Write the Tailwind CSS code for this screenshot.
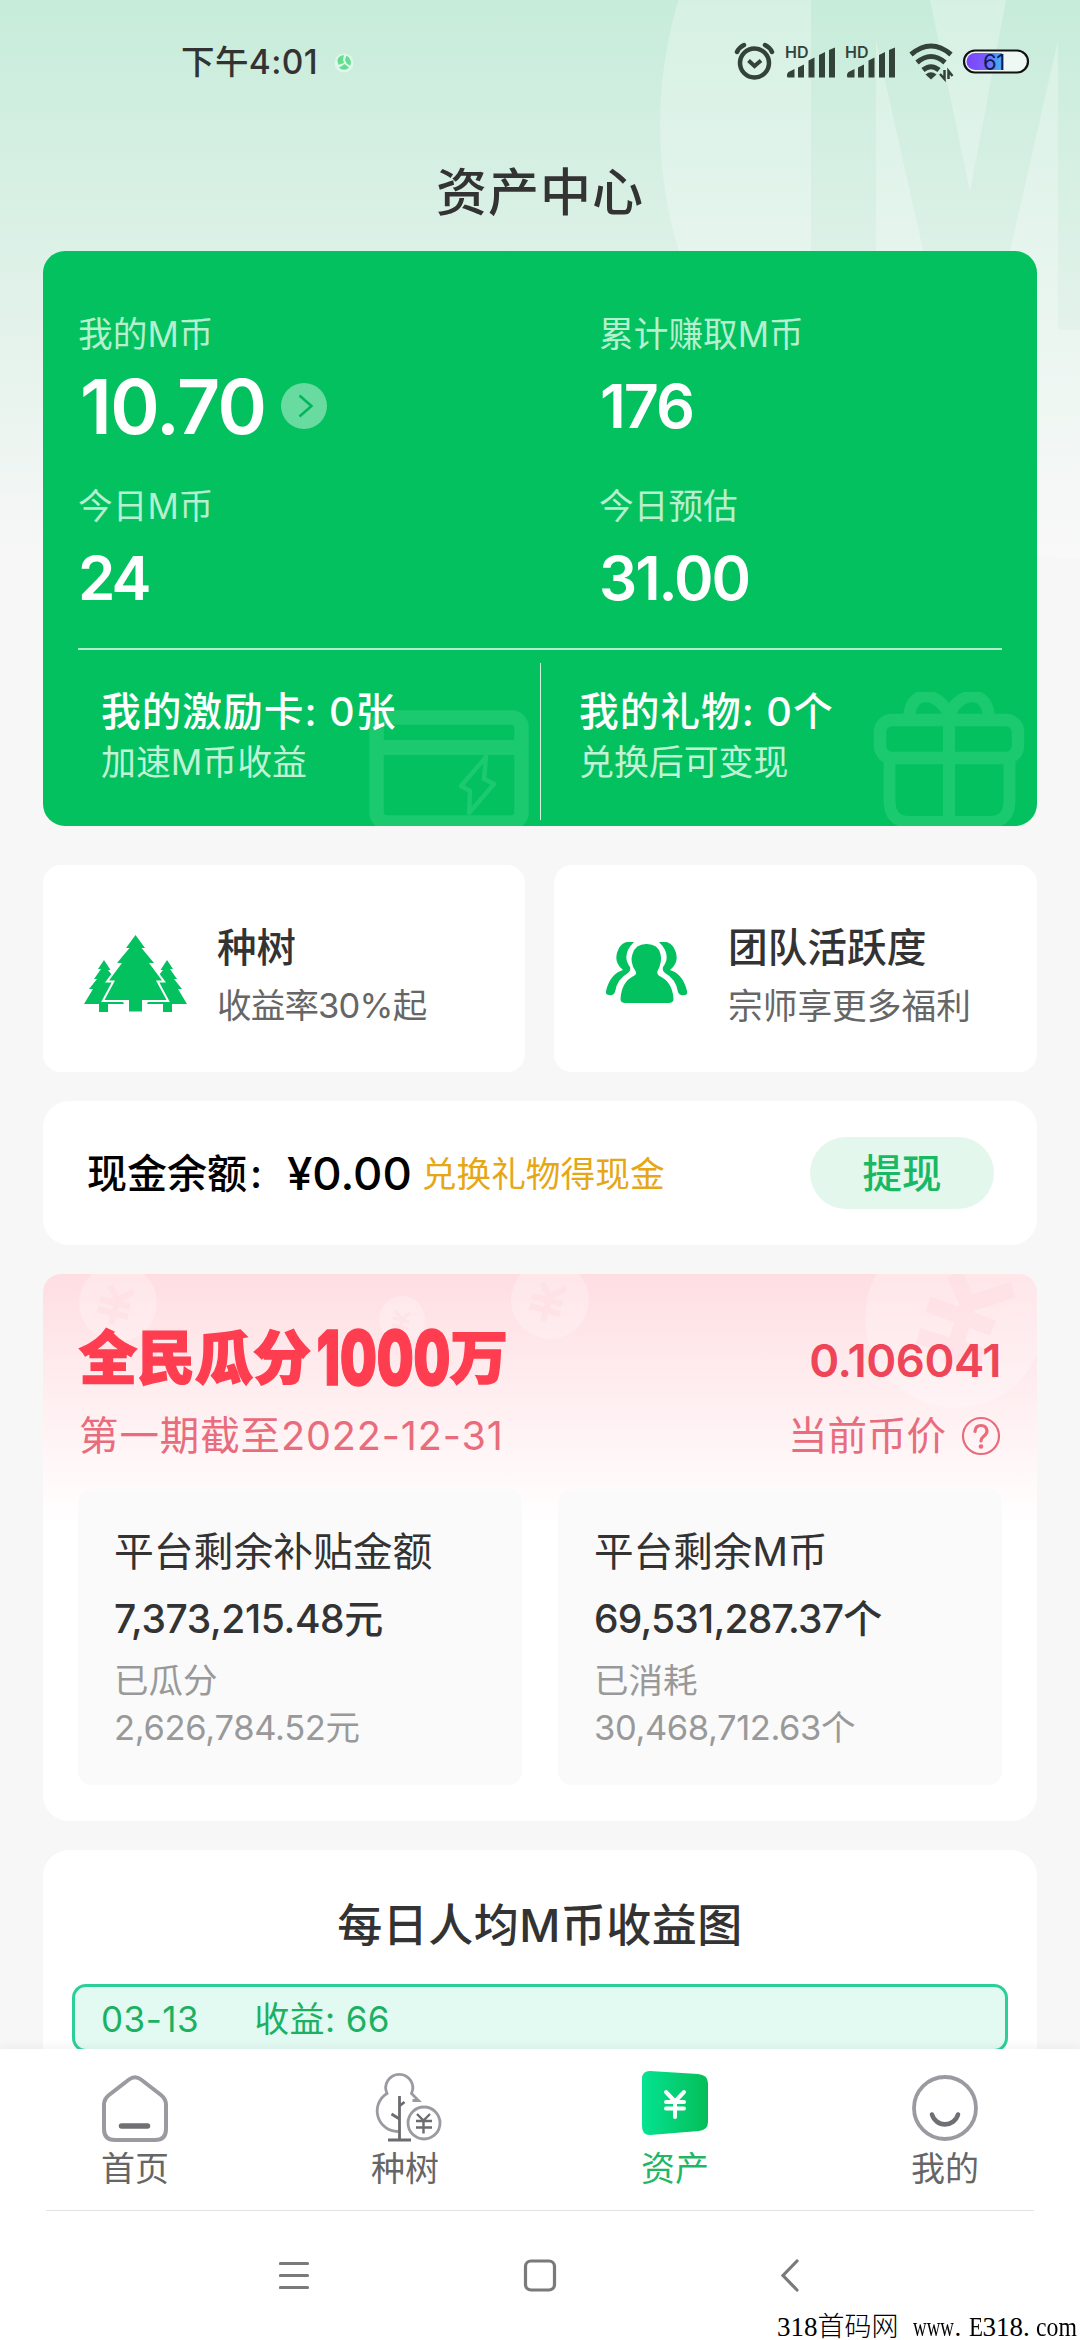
<!DOCTYPE html>
<html lang="zh-CN">
<head>
<meta charset="utf-8">
<title>资产中心</title>
<script src="https://cdn.jsdelivr.net/npm/@tailwindcss/browser@4"></script>
</head>
<body class="w-[1080px] h-[2340px] overflow-hidden bg-[#f7f7f7] font-['Inter','Noto_Sans_CJK_SC',sans-serif] text-[#333]">
<div class="relative w-[1080px] h-[2340px] overflow-hidden flex flex-col whitespace-nowrap">

  <!-- header backdrop -->
  <div class="absolute inset-x-0 top-0 h-[560px] bg-linear-to-b from-[#c7ecda] to-[#f7f7f7]">
    <svg class="w-full h-full" viewBox="0 0 1080 560">
      <mask id="m"><rect width="1080" height="560" fill="#fff"/><path fill="#000" d="M811 0H930L970 192L1006 0H1080V330H1058V40L992 330H941L876 40V330H811Z"/></mask>
      <circle cx="1094" cy="125" r="434" fill="#fff" fill-opacity=".27" mask="url(#m)"/>
    </svg>
  </div>

  <!-- status bar -->
  <div class="relative h-[126px] pl-[181px] pr-[50px] flex items-center">
    <span class="text-[33.500px] leading-none font-medium tracking-[.4px]">下午4:01</span>
    <svg class="ml-[16px] w-[20px] h-[20px]" viewBox="0 0 18 18"><circle cx="9" cy="9" r="8.500" fill="#dff7ea"/><path d="M3 6.500a6.500 6.500 0 0 1 6-4.500l-1 4 1 3-5 1.500zM11 2.500a6.500 6.500 0 0 1 3.500 9l-3-2-1.500-3zM13.500 13a6 6 0 0 1-9 0l3-1.500 2-1.500z" fill="#63dd90"/></svg>
    <svg class="absolute left-[730px] top-[38px] w-[305px] h-[50px]" viewBox="730 38 305 50" fill="none" stroke="#33433a">
      <circle cx="754.500" cy="63" r="14.500" stroke-width="4.500"/>
      <path d="M748.500 60.500l6 5.500 6.500-5.500" stroke-width="4"/>
      <path d="M737 52q2-4.500 7-7M772 52q-2-4.500-7-7" stroke-width="4.500" stroke-linecap="round"/>
      <g fill="#33433a" stroke="none">
        <g id="sig"><path d="M787.500 77.500q-1.500-3 1-5.500l6-3v8.500zM798 77.500v-10l6-3v13zM808.500 77.500v-17l6-3v20zM819 77.500v-22.500l6-3v25.500zM829 77.500V50l6-2.500v30z"/></g>
        <use href="#sig" x="60"/>
      </g>
      <path d="M911 54.500q20-17 40 0M917 62.500q14-12 28 0M923 70q8-6.500 16 0" stroke-width="5"/>
      <path d="M925.500 74.500q5.500-4.500 11 0l-5.500 5z" fill="#33433a" stroke="none"/>
      <path d="M944.500 70v9l-4.500-5M948.500 79v-8l4 5" stroke-width="2.500"/>
      <rect x="964" y="50.500" width="64" height="22" rx="11" fill="#eef9f3" stroke="#111" stroke-width="2.200"/>
      <linearGradient id="bat"><stop offset="0" stop-color="#7b45fb"/><stop offset=".55" stop-color="#7a5cff"/><stop offset="1" stop-color="#3fb5f5"/></linearGradient>
      <path d="M975 53h27v17h-27a8.500 8.500 0 0 1 0-17z" fill="url(#bat)" stroke="none"/>
    </svg>
    <span class="absolute left-[785px] top-[44px] text-[16px] leading-[16px] font-semibold text-[#33433a]">HD</span>
    <span class="absolute left-[845px] top-[44px] text-[16px] leading-[16px] font-semibold text-[#33433a]">HD</span>
    <span class="absolute left-[983px] top-[52px] text-[22px] leading-[20px] font-normal tracking-[-.5px] text-[#0b1c55]">61</span>
  </div>

  <h1 class="relative h-[125px] pt-[32px] text-center text-[51px] leading-[70px] font-medium tracking-[1px]">资产中心</h1>

  <main class="relative px-[43px] h-[1798px] overflow-hidden flex flex-col">

    <!-- asset summary -->
    <section class="relative h-[575px] shrink-0 rounded-[22px] bg-[#03c15f] text-white overflow-hidden flex flex-col">
      <div class="h-[397px] pt-[63px] pl-[35px] grid grid-cols-[521px_1fr] grid-rows-[172px_1fr]">
        <div>
          <p class="text-[34.700px] leading-[40px] text-[#b6f0cf]">我的M币</p>
          <div class="mt-[13px] pl-[2px] flex items-center gap-[16px]">
            <span class="text-[75px] leading-[80px] font-semibold tracking-[-1.500px]">10.70</span>
            <svg class="w-[46px] h-[46px] -mt-[3px]" viewBox="0 0 46 46" fill="none"><circle cx="23" cy="23" r="23" fill="#67dba0"/><path d="M18.500 12.500l12 10.500-12 10.500" stroke="#03b559" stroke-width="2.500"/></svg>
          </div>
        </div>
        <div>
          <p class="text-[34.700px] leading-[40px] text-[#b6f0cf]">累计赚取M币</p>
          <p class="mt-[12px] pl-[1px] text-[61px] leading-[80px] font-semibold tracking-[-2px]">176</p>
        </div>
        <div>
          <p class="text-[34.700px] leading-[40px] text-[#b6f0cf]">今日M币</p>
          <p class="mt-[22px] text-[60px] leading-[60px] font-semibold tracking-[-3px]">24</p>
        </div>
        <div>
          <p class="text-[34.700px] leading-[40px] text-[#b6f0cf]">今日预估</p>
          <p class="mt-[22px] text-[60px] leading-[60px] font-semibold tracking-[-2px]">31.00</p>
        </div>
      </div>
      <div class="mx-[35px] h-[2px] bg-[#b5ecce]"></div>
      <svg class="absolute left-[326px] top-[441px] w-[668px] h-[134px]" viewBox="369 692 668 134" fill="none" stroke="#1bc96f">
        <rect x="376.500" y="717.500" width="145" height="105" rx="10" stroke-width="14.500"/>
        <path d="M376 747.500h146" stroke-width="15"/>
        <path d="M486 757l-25 29 9 5-1 22 25-29-10-5z" stroke-width="4.500" stroke-linejoin="round"/>
        <rect x="880" y="720" width="138" height="38" rx="12" stroke-width="12.500"/>
        <path d="M889.500 758v42q0 22 20 22h80q20 0 20-22v-42M949 720v102" stroke-width="12"/>
        <path d="M909 720c0-34 32-28 40-4c8-24 40-30 40 4" stroke-width="12"/>
      </svg>
      <div class="relative flex-1 pt-[37px] pl-[58px] grid grid-cols-[478px_1fr]">
        <div>
          <p class="text-[39.700px] leading-[50px] font-medium tracking-[1px]">我的激励卡: 0张</p>
          <p class="mt-[5px] text-[34.900px] leading-[40px] text-[#c0f3d6]">加速M币收益</p>
        </div>
        <div>
          <p class="text-[39.700px] leading-[50px] font-medium tracking-[1px]">我的礼物: 0个</p>
          <p class="mt-[5px] text-[34.900px] leading-[40px] text-[#c0f3d6]">兑换后可变现</p>
        </div>
        <div class="absolute left-[497px] top-[13px] w-px h-[157px] bg-[#d5f5e3]"></div>
      </div>
    </section>

    <!-- shortcuts -->
    <section class="mt-[39px] h-[207px] shrink-0 grid grid-cols-[482px_483px] gap-[29px]">
      <div class="rounded-[18px] bg-white pl-[41px] flex">
        <svg class="mt-[69px] w-[104px] h-[80px]" viewBox="84 934 104 80" fill="#03c15f">
          <path d="M104 960l6.500 10h-2.500l8 10h-3l8 12h-3l6 12h-16v8h-9v-8h-15l9-15h-4l8-10h-3l7-10h-3z"/>
          <path d="M167 960l-6.500 10h2.500l-8 10h3l-8 12h3l-6 12h16v8h9v-8h15l-9-15h4l-8-10h3l-7-10h3z"/>
          <path stroke="#fff" stroke-width="4" paint-order="stroke" d="M135.500 935l9.500 13h-3.500l12.500 15h-5l13 17.500h-6l10.500 19.500h-24.500v11.500h-13v-11.500h-24.500l10.500-19.500h-6l13-17.500h-5l12.500-15h-3.500z"/>
        </svg>
        <div class="ml-[29px] pt-[58px]">
          <p class="text-[39.500px] leading-[50px] font-medium">种树</p>
          <p class="mt-[13px] text-[34.500px] leading-[40px] tracking-[-.8px] text-[#666]">收益率30%起</p>
        </div>
      </div>
      <div class="rounded-[18px] bg-white pl-[52px] flex">
        <svg class="mt-[77px] w-[82px] h-[62px]" viewBox="606 943 82 62" fill="#03c15f">
          <path d="M634 943q-10-2-15 6q-7 13 4 22q-13 4-17 21q-1 4 3 4q4 1 6-3q2-13 13-19q3-2 2-6q-9-12 4-25z"/>
          <path d="M659 943q10-2 15 6q7 13-4 22q13 4 17 21q1 4-3 4q-4 1-6-3q-2-13-13-19q-3-2-2-6q9-12-4-25z"/>
          <path d="M647 945q11 0 13.500 10q2 8-3 17q-1 3 2 5q13 6 14 23q0 4-5 4h-43q-5 0-5-4q1-17 13-23q4-2 2-5q-6-9-3-17q3-10 13.500-10z"/>
        </svg>
        <div class="ml-[40px] pt-[58px]">
          <p class="text-[39.700px] leading-[50px] font-medium">团队活跃度</p>
          <p class="mt-[13px] text-[34.700px] leading-[40px] text-[#666]">宗师享更多福利</p>
        </div>
      </div>
    </section>

    <!-- cash balance -->
    <section class="mt-[29px] h-[144px] shrink-0 rounded-[26px] bg-white pl-[44px] pr-[43px] pt-[2px] flex items-center text-black">
      <span class="text-[40px] leading-[50px] font-medium">现金余额</span>
      <span class="w-[40px] text-[40px] leading-[50px] font-medium pl-[3px]">:</span>
      <span class="text-[45.500px] leading-[50px] font-medium">¥0.00</span>
      <span class="ml-[10px] text-[34.700px] leading-[50px] text-[#e6a715]">兑换礼物得现金</span>
      <button class="ml-auto w-[184px] h-[72px] -mt-[2px] rounded-full bg-[#e4f7ec] text-[39.500px] leading-[74px] font-medium text-[#18b864]">提现</button>
    </section>

    <!-- subsidy pool -->
    <section class="relative mt-[29px] h-[547px] shrink-0 rounded-t-[18px] rounded-b-[26px] bg-white overflow-hidden">
      <div class="absolute inset-x-0 top-0 h-[250px] bg-linear-to-b from-[#fedee2] to-white">
        <svg class="w-full h-[150px]" viewBox="43 1274 994 150" fill="#fff" fill-opacity=".25">
          <circle cx="118" cy="1303" r="39"/><circle cx="402" cy="1319" r="23"/><circle cx="550" cy="1300" r="39"/><circle cx="955" cy="1318" r="90"/>
          <g fill="none" stroke="#fddde1" stroke-opacity=".55">
            <g id="y"><path d="M542 1283l8 14 16-9M550 1297l-7 24M532 1296l30 8M530 1306l30 8" stroke-width="6"/></g>
            <use href="#y" x="-432" y="3"/>
            <path d="M395 1311l7 8 8-6M402 1319l-3 13M393 1318l16 4M392 1325l16 4" stroke-width="3"/>
            <path d="M955 1274l13 30 45-14M968 1304l-18 60M928 1304l65 24M918 1336l65 20" stroke-width="16"/>
          </g>
        </svg>
      </div>
      <div class="relative px-[36px] pt-[53px] flex justify-between">
        <div>
          <h2 class="flex text-[58px] leading-[62px] font-black text-[#fe3e50] [-webkit-text-stroke:1.500px_#fe3e50]"><span>全民瓜分</span><span class="w-[139px] text-[75px]"><span class="inline-block origin-left scale-x-[.69] pl-[8px] tracking-[0px]">1000</span></span><span>万</span></h2>
          <p class="mt-[27px] text-[39.500px] leading-[40px] tracking-[.9px] text-[#e96c7c]">第一期截至2022-12-31</p>
        </div>
        <div class="flex flex-col items-end">
          <p class="pt-[3px] text-[45.500px] leading-[62px] font-semibold tracking-[-.5px] text-[#ee4558]">0.106041</p>
          <p class="mt-[24px] flex items-center gap-[15px] text-[39.500px] leading-[40px] text-[#e96c7c]">当前币价
            <svg class="w-[40px] h-[40px]" viewBox="0 0 40 40" fill="none" stroke="#e96c7c"><circle cx="20" cy="20" r="18" stroke-width="2.200"/><path d="M14 15.500q.5-6 6-6t6 5.500q0 3-3.500 5.500-2.500 2-2.500 4.500" stroke-width="3.200" stroke-linecap="round"/><circle cx="20" cy="30.500" r="2.300" fill="#e96c7c" stroke="none"/></svg>
          </p>
        </div>
      </div>
      <div class="relative mt-[33px] mx-[35px] grid grid-cols-[444px_444px] gap-[36px]">
        <div class="h-[296px] rounded-[14px] bg-[#fafafa] pl-[36px] pt-[38px]">
          <p class="text-[39.800px] leading-[50px]">平台剩余补贴金额</p>
          <p class="mt-[17px] text-[39px] leading-[50px] font-medium tracking-[-.4px]">7,373,215.48元</p>
          <p class="mt-[17px] text-[34.500px] leading-[40px] text-[#999]">已瓜分</p>
          <p class="mt-[7px] text-[34.500px] leading-[40px] tracking-[-.3px] text-[#999]">2,626,784.52元</p>
        </div>
        <div class="h-[296px] rounded-[14px] bg-[#fafafa] pl-[36px] pt-[38px]">
          <p class="text-[39.600px] leading-[50px]">平台剩余M币</p>
          <p class="mt-[17px] text-[39px] leading-[50px] font-medium tracking-[-.8px]">69,531,287.37个</p>
          <p class="mt-[17px] text-[34.500px] leading-[40px] text-[#999]">已消耗</p>
          <p class="mt-[7px] text-[34.500px] leading-[40px] tracking-[-.4px] text-[#999]">30,468,712.63个</p>
        </div>
      </div>
    </section>

    <!-- daily earnings -->
    <section class="mt-[29px] h-[300px] shrink-0 rounded-[26px] bg-white px-[29px] pt-[46px]">
      <h2 class="text-center text-[45px] leading-[60px] font-medium tracking-[.5px]">每日人均M币收益图</h2>
      <div class="mt-[28px] h-[68px] rounded-[14px] border-[3px] border-[#2dcf98] bg-[#e2faf1] pl-[26px] flex gap-[55px] text-[35px] leading-[64px] text-[#1bb162]">
        <span class="tracking-[.5px]">03-13</span><span class="tracking-[.4px]">收益: 66</span>
      </div>
    </section>
  </main>

  <!-- tab bar -->
  <nav class="relative h-[161px] bg-white grid grid-cols-4 text-center text-[34px] leading-[40px] text-[#666] shadow-[0_-2px_10px_rgba(0,0,0,.05)]">
    <div class="flex flex-col items-center pt-[16px]">
      <svg class="w-[80px] h-[80px]" viewBox="0 0 80 80" fill="none" stroke="#9a9aa0" stroke-width="4"><path d="M34 14.500q6-4.500 12 0l20 15.500q5 4 5 10v24q0 11-11 11H20q-11 0-11-11V40q0-6 5-10z"/><path d="M26.500 61h26" stroke="#707074" stroke-width="5.500" stroke-linecap="round"/></svg>
      <span class="mt-[4px]">首页</span>
    </div>
    <div class="flex flex-col items-center pt-[16px]">
      <svg class="w-[80px] h-[80px]" viewBox="0 0 80 80" fill="none" stroke="#9a9aa0" stroke-width="2.800"><path d="M33 66.500a20.500 20.500 0 0 1-11-38a13.500 13.500 0 1 1 24.500 0l7 7h-6"/><path d="M34.500 31v43M23 75h23M34.500 54l-8-5M34.500 41l5-4" stroke="#6c6c70"/><circle cx="59" cy="58" r="16"/><path d="M52 49l6.500 6.500 6.500-6.500M58.500 55.500v13M51 56h16M51 62.500h16" stroke="#6c6c70" stroke-width="2.400"/></svg>
      <span class="mt-[4px]">种树</span>
    </div>
    <div class="flex flex-col items-center pt-[16px] text-[#1fb765]">
      <svg class="w-[80px] h-[80px]" viewBox="0 0 80 80"><linearGradient id="g"><stop offset="0" stop-color="#04e392"/><stop offset="1" stop-color="#04be58"/></linearGradient><path d="M15 6L63 9Q73 10 73 18V57Q73 65 64 66L15 70Q7 70 7 61V14Q7 6 15 6Z" fill="url(#g)"/><path d="M31 27l9 9.500 9-9.500M40 36v16M31 37h18M31 43.500h18" fill="none" stroke="#fff" stroke-width="4" stroke-linecap="round"/></svg>
      <span class="mt-[4px]">资产</span>
    </div>
    <div class="flex flex-col items-center pt-[16px]">
      <svg class="w-[80px] h-[80px]" viewBox="0 0 80 80" fill="none"><circle cx="40" cy="43" r="31" stroke="#9a9aa0" stroke-width="3.800"/><path d="M27 49.500a13.500 13.500 0 0 0 26 0" stroke="#707074" stroke-width="4.600" stroke-linecap="round"/></svg>
      <span class="mt-[4px]">我的</span>
    </div>
  </nav>

  <!-- system navigation -->
  <footer class="relative h-[130px] bg-white px-[46px]">
    <div class="h-px bg-[#e3e3e3]"></div>
    <div class="-mx-[46px] h-[129px] pl-[279px] pt-[46px] flex">
      <svg class="w-[525px] h-[38px]" viewBox="279 2256 525 38" fill="none" stroke="#7a7a7a" stroke-width="3.200" stroke-linecap="round"><path d="M280.500 2262.500h27M280.500 2274.500h27M280.500 2286.500h27M797 2260l-14 14.500 14 14.500"/><rect x="525.500" y="2260" width="29" height="29" rx="5.500"/></svg>
    </div>
    <p class="absolute left-[777px] top-[99px] flex text-[27px] leading-[36px] text-black font-['Liberation_Serif','Noto_Sans_CJK_SC',serif]"><span>318</span><span class="font-light">首码网</span><span class="w-[42px] ml-[14px]"><span class="inline-block origin-left scale-x-[.7]">www</span></span><span class="w-[14px]">.</span><span class="w-[14px]"><span class="inline-block origin-left scale-x-[.85]">E</span></span><span>318</span><span class="w-[13px]">.</span><span class="inline-block origin-left scale-x-[.88]">com</span></p>
  </footer>
</div>
</body>
</html>
